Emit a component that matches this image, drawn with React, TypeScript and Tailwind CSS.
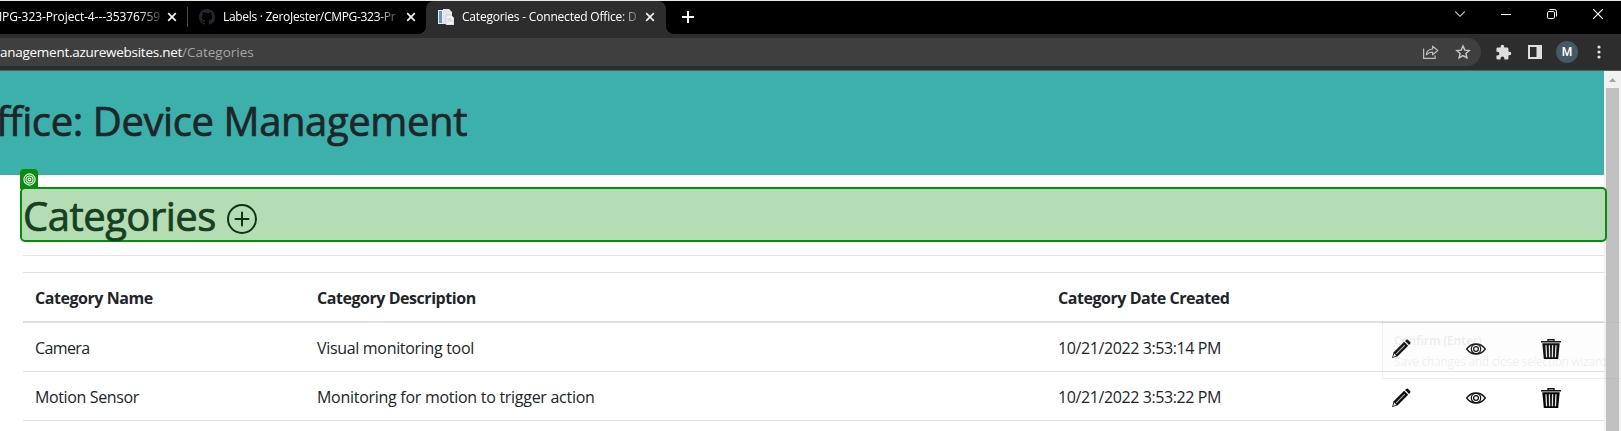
import React from "react";

const rows = [
  {
    name: "Camera",
    nameClass: "tracking-[-0.6px]",
    description: "Visual monitoring tool",
    descriptionClass: "tracking-[-0.32px]",
    date: "10/21/2022 3:53:14 PM",
  },
  {
    name: "Motion Sensor",
    nameClass: "tracking-[-0.37px]",
    description: "Monitoring for motion to trigger action",
    descriptionClass: "tracking-[-0.28px]",
    date: "10/21/2022 3:53:22 PM",
  },
];

function Cross({ className }: { className?: string }) {
  return (
    <svg viewBox="0 0 10 10" className={`h-[10px] w-[10px] shrink-0 ${className ?? ""}`} fill="none" stroke="#f1f1f1" strokeWidth="1.7">
      <path d="M1.2 1.2 8.8 8.8M8.8 1.2 1.2 8.8" />
    </svg>
  );
}

function TabStrip() {
  return (
    <div className="flex h-[34px] shrink-0 border-t border-[#e8e8e8] bg-black text-[12px] text-white">
      <div className="flex w-[187px] items-center pb-px">
        <div className="flex w-[160px] justify-end overflow-hidden whitespace-nowrap [mask-image:linear-gradient(to_right,black_138px,rgba(0,0,0,0.25)_160px)]">
          <span className="tracking-[-0.1px]">MPG-323-Project-4---35376759</span>
        </div>
        <Cross className="ml-[7px]" />
      </div>
      <div className="flex w-[231px] items-center border-0 pb-px">
        <div className="h-[20px] w-px bg-[#4a4a4a]" />
        <svg viewBox="0 0 16 16" className="ml-[11px] h-4 w-4 shrink-0" fill="#24292f">
          <path d="M8 0C3.58 0 0 3.58 0 8c0 3.54 2.29 6.53 5.47 7.59.4.07.55-.17.55-.38 0-.19-.01-.82-.01-1.49-2.01.37-2.53-.49-2.69-.94-.09-.23-.48-.94-.82-1.13-.28-.15-.68-.52-.01-.53.63-.01 1.08.58 1.23.82.72 1.21 1.87.87 2.33.66.07-.52.28-.87.51-1.07-1.78-.2-3.64-.89-3.64-3.95 0-.87.31-1.59.82-2.15-.08-.2-.36-1.02.08-2.12 0 0 .67-.21 2.2.82.64-.18 1.32-.27 2-.27s1.36.09 2 .27c1.53-1.04 2.2-.82 2.2-.82.44 1.1.16 1.92.08 2.12.51.56.82 1.27.82 2.15 0 3.07-1.87 3.75-3.65 3.95.29.25.54.73.54 1.48 0 1.07-.01 1.93-.01 2.2 0 .21.15.46.55.38A8.01 8.01 0 0 0 16 8c0-4.42-3.58-8-8-8z" />
        </svg>
        <div className="ml-2 w-[175px] whitespace-nowrap [mask-image:linear-gradient(to_right,black_154px,transparent_180px)]">
          <span className="tracking-[-0.3px]">Labels · ZeroJester/CMPG-323-Pr</span>
        </div>
        <Cross className="ml-[8px]" />
      </div>
      <svg viewBox="0 0 8 33" className="h-[33px] w-2 shrink-0" fill="#2d2d2d">
        <path d="M8 33V25A8 8 0 0 1 0 33z" />
      </svg>
      <div className="flex w-[240px] items-center rounded-t-lg bg-[#2d2d2d] pb-px">
        <svg viewBox="0 0 16 16" className="ml-3 h-4 w-4 shrink-0">
          <path d="M0 1h5v14H0z" fill="#e4eef6" />
          <path d="M1 2h3v12H1z" fill="#5b9bcb" />
          <path d="M5 0h6l3 3v12H5z" fill="#e6e6ea" />
          <path d="M8 6h5l3 3v7H8z" fill="#f4f4f7" stroke="#b9bcc6" strokeWidth=".6" />
          <path d="M9.500 10h4M9.500 12h5" stroke="#b6b8c2" strokeWidth=".8" />
        </svg>
        <div className="ml-2 w-[175px] whitespace-nowrap [mask-image:linear-gradient(to_right,black_158px,transparent_182px)]">
          <span className="tracking-[-0.2px]">Categories - Connected Office: D</span>
        </div>
        <Cross className="ml-[8px]" />
      </div>
      <svg viewBox="0 0 8 33" className="h-[33px] w-2 shrink-0" fill="#2d2d2d">
        <path d="M0 33V25A8 8 0 0 0 8 33z" />
      </svg>
      <svg viewBox="0 0 12 12" className="ml-2 mt-[10px] h-3 w-3 shrink-0" stroke="#fff" strokeWidth="2">
        <path d="M6 0v12M0 6h12" />
      </svg>
      <div className="ml-auto flex h-[26px] items-center text-white">
        <svg viewBox="0 0 10 10" className="mr-[36px] h-[10px] w-[10px]" fill="none" stroke="#d0d0d0" strokeWidth="1.1">
          <path d="M.2 2.500 5 7.300 9.800 2.500" />
        </svg>
        <svg viewBox="0 0 10 10" className="mr-[36px] h-[10px] w-[10px]" stroke="#fff">
          <path d="M0 5.500h10" />
        </svg>
        <svg viewBox="0 0 10 10" className="mr-[36px] h-[10px] w-[10px]" fill="none" stroke="#fff">
          <rect x=".5" y="2.500" width="7" height="7" rx="1.300" />
          <path d="M2.500.500h5a2 2 0 0 1 2 2v5" />
        </svg>
        <svg viewBox="0 0 10 10" className="mr-[18px] h-[10px] w-[10px]" stroke="#fff" strokeWidth="1.100">
          <path d="M0 0 10 10M10 0 0 10" />
        </svg>
      </div>
    </div>
  );
}

function Toolbar() {
  return (
    <div className="flex h-[37px] shrink-0 items-start border-b border-[#5a5a5a] bg-[#2d2d2d] pt-1">
      <div className="flex h-[28px] w-[1481px] items-center rounded-r-full bg-[#3f3f3f] text-[13.5px] text-white">
        <span className="whitespace-nowrap tracking-[-0.27px]">
          anagement.azurewebsites.net<span className="tracking-normal text-[#a5a5a5]">/Categories</span>
        </span>
        <svg viewBox="0 0 16 14" className="ml-auto h-[14px] w-4" fill="none" stroke="#bdbdbd" strokeWidth="1.200">
          <path d="M.6 3.500v9.900h11.500v-3" />
          <path d="M3.300 9.800c.4-3.600 2.600-5.700 6.300-5.800V1.200l5.200 4.300-5.200 4.300V7.200C6.900 7.200 5 8 3.300 9.800z" strokeLinejoin="round" />
        </svg>
        <svg viewBox="0 0 16 16" className="ml-4 mr-[10px] h-4 w-4" fill="none" stroke="#c8c8c8" strokeWidth="1.400">
          <path d="m8 2 1.800 4.100 4.400.4-3.300 3 1 4.400L8 11.600l-3.900 2.300 1-4.400-3.300-3 4.400-.4z" />
        </svg>
      </div>
      <div className="flex h-[28px] items-center">
        <svg viewBox="0 0 24 24" className="ml-[14px] h-[17px] w-[17px]" fill="#dedede">
          <path d="M20.500 11H19V7a2 2 0 0 0-2-2h-4V3.500a2.500 2.500 0 0 0-5 0V5H4a2 2 0 0 0-2 2v3.800h1.500a2.700 2.700 0 0 1 0 5.400H2V20a2 2 0 0 0 2 2h3.800v-1.500a2.700 2.700 0 0 1 5.400 0V22H17a2 2 0 0 0 2-2v-4h1.500a2.500 2.500 0 0 0 0-5z" />
        </svg>
        <svg viewBox="0 0 14 14" className="ml-4 h-[14px] w-[14px]">
          <path d="M0 0h14v14H0zM2 2v10h6.500V2z" fill="#dedede" fillRule="evenodd" />
        </svg>
        <div className="ml-[14px] flex h-[22px] w-[22px] items-center justify-center rounded-full bg-[#455a64] font-['Roboto',sans-serif] text-[12px] font-medium text-white">M</div>
        <svg viewBox="0 0 4 14" className="ml-[19px] h-[14px] w-1" fill="#e0e0e0">
          <circle cx="2" cy="2" r="1.600" />
          <circle cx="2" cy="7" r="1.600" />
          <circle cx="2" cy="12" r="1.600" />
        </svg>
      </div>
    </div>
  );
}

function Pencil() {
  return (
    <svg viewBox="0 0 20 20" className="h-5 w-5">
      <path d="M1 19 2.700 13.300 13.200 2.800l4 4L6.700 17.300z" fill="#0c0c0c" />
      <path d="m14 2 1.500-1.300q.7-.5 1.300 0l2.400 2.400q.5.700 0 1.400L18 6z" fill="#0c0c0c" />
      <path d="m5.200 14.800 8.600-8.600" stroke="#b5b5b5" strokeWidth="1.100" />
      <path d="m14.800 2.900 2.400 2.400" stroke="#ccc" strokeWidth=".7" />
      <path d="m2 18 1.300-3.400 2.100 2.100z" fill="#e6e6e6" />
    </svg>
  );
}

function Eye() {
  return (
    <svg viewBox="0 0 20 12" className="h-3 w-5" fill="none" stroke="#151515" strokeWidth="1.300">
      <path d="M.7 6C5.500-.7 14.500-.7 19.300 6 14.500 12.700 5.500 12.700.7 6z" />
      <circle cx="10" cy="6" r="4.700" />
      <circle cx="10" cy="6" r="2.400" />
    </svg>
  );
}

function Trash() {
  return (
    <svg viewBox="0 0 20 20" className="h-5 w-5">
      <path d="M7 2V.7h6V2M0 2.700h20" fill="none" stroke="#111" strokeWidth="1.400" />
      <path d="M1.300 4.300h17.400L17.200 20H2.800z" fill="#080808" />
      <path d="m5 6.300.6 12M8.400 6.300l.2 12M11.600 6.300l-.2 12M15 6.300l-.6 12" stroke="#e6e6e6" strokeWidth="1.300" />
    </svg>
  );
}

const grid = "grid grid-cols-[282px_741px_558px]";

function Page() {
  return (
    <main className="min-w-0 flex-1 bg-white text-[#212529]">
      <header className="flex h-[104px] w-[1604px] bg-[#3cb0ab]">
        <h1 className="mt-[22px] flex h-[56px] w-[467px] items-center justify-end whitespace-nowrap text-[40px] font-medium leading-[56px] [-webkit-text-stroke:0.7px]">
          <span className="tracking-[-0.4px]">ffice: Device Management</span>
        </h1>
      </header>
      <section className="relative ml-5 mt-3 flex h-[55px] w-[1587px] items-center rounded-[5px] border-2 border-[#078d0c] bg-[#b4ddb4] text-[#16401f]">
        <div className="absolute -left-[2px] -top-[20px] flex h-[20px] w-[18px] items-center justify-center rounded-t-[4px] bg-[#078d0c]">
          <svg viewBox="0 0 14 14" className="h-[13px] w-[13px]" fill="none" stroke="#f0faf0" strokeWidth="1.200">
            <circle cx="7" cy="7" r="6" />
            <circle cx="7" cy="7" r="3.800" />
            <circle cx="7" cy="7" r="1.500" />
          </svg>
        </div>
        <h2 className="ml-px w-[204px] whitespace-nowrap pt-[3px] text-[40px] font-medium leading-[48px] tracking-[-0.5px] [-webkit-text-stroke:0.7px]">Categories</h2>
        <svg viewBox="0 0 30 30" className="mt-2 h-[30px] w-[30px]" fill="none" stroke="#0c3312" strokeWidth="2">
          <circle cx="15" cy="15" r="14" />
          <path d="M15 8.500v13M8.500 15h13" strokeLinecap="round" />
        </svg>
      </section>
      <div className="ml-[23px] mt-[13px] h-px w-[1581px] bg-[#e3e4e5]" />
      <div className="relative ml-[23px] mt-4 w-[1581px] text-[16px] leading-6">
        <div className={`${grid} h-[51px] border-b-2 border-t border-[#dee2e6] pt-[13px] font-bold tracking-[-0.45px]`}>
          <span className="pl-3">Category Name</span>
          <span className="pl-3">Category Description</span>
          <span className="pl-3">Category Date Created</span>
        </div>
        {rows.map((row) => (
          <div key={row.name} className={`${grid} h-[49px] border-b border-[#dee2e6] pt-[13px]`}>
            <span className="pl-3"><span className={row.nameClass}>{row.name}</span></span>
            <span className="pl-3"><span className={row.descriptionClass}>{row.description}</span></span>
            <div className="flex pl-3">
              <span className="w-[333px] tracking-[-0.4px]">{row.date}</span>
              <span className="mt-[3px] w-[75px] shrink-0"><Pencil /></span>
              <span className="mt-[7px] w-[75px] shrink-0"><Eye /></span>
              <span className="mt-[3px] shrink-0"><Trash /></span>
            </div>
          </div>
        ))}
        <div className="pointer-events-none absolute left-[1359px] top-[50px] h-[57px] w-[239px] whitespace-nowrap border-y border-l border-[#777]/10 bg-[#d0d0d0]/5 pl-[11px] pt-[7px] text-[12px] leading-[21px] text-[#555]/10">
          <div className="font-bold tracking-[-0.3px]">Confirm (Enter)</div>
          <div className="tracking-[-0.3px]">Save changes and close selection wizard.</div>
        </div>
      </div>
    </main>
  );
}

export default function App() {
  return (
    <div className="flex h-[431px] w-[1621px] flex-col overflow-hidden bg-white font-['Open_Sans','Noto_Sans',sans-serif]">
      <TabStrip />
      <Toolbar />
      <div className="flex min-h-0 flex-1 bg-[#f1f1f1]">
        <div className="relative z-10 flex w-[1604px] shrink-0"><Page /></div>
        <div className="flex w-[17px] flex-col items-center">
          <svg viewBox="0 0 17 17" className="h-[17px] w-[17px]" fill="#a3a3a3">
            <path d="M5 11h7L8.500 7z" />
          </svg>
          <div className="w-[13px] flex-1 bg-[#c1c1c1]" />
        </div>
      </div>
    </div>
  );
}
